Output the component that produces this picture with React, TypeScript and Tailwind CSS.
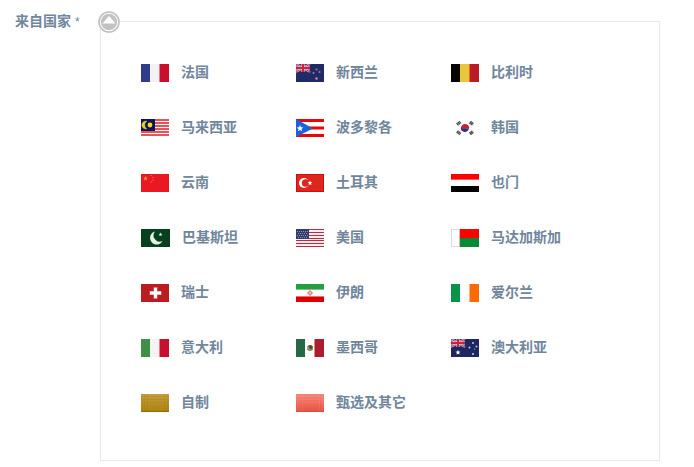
import type { ReactNode } from "react";

type Country = { name: string; flag: ReactNode; width?: number };

function Tricolor({ a, b, c }: { a: string; b: string; c: string }) {
  return (
    <>
      <rect width="28" height="18" fill={b} />
      <rect width="9" height="18" fill={a} />
      <rect x="18" width="1" height="18" fill={c} opacity="0.5" />
      <rect x="19" width="9" height="18" fill={c} />
    </>
  );
}

function UnionJack() {
  return (
    <>
      <rect width="14" height="8" fill="#2b3a80" />
      <path d="M0 0L14 8M14 0L0 8" stroke="#e8c8d4" strokeWidth="2" />
      <path d="M0 0L14 8M14 0L0 8" stroke="#d0304a" strokeWidth="1" />
      <path d="M7 0V8M0 4H14" stroke="#f0dfe6" strokeWidth="3" />
      <path d="M7 0V8M0 4H14" stroke="#d0203c" strokeWidth="2" />
    </>
  );
}

function Star({ x, y, r, fill }: { x: number; y: number; r: number; fill: string }) {
  const points = Array.from({ length: 10 }, (_, i) => {
    const radius = i % 2 ? r * 0.45 : r;
    const angle = (i * Math.PI) / 5 - Math.PI / 2;
    return `${x + radius * Math.cos(angle)},${y + radius * Math.sin(angle)}`;
  }).join(" ");
  return <polygon points={points} fill={fill} />;
}

const countries: Country[] = [
  { name: "法国", flag: <Tricolor a="#2f3c8c" b="#f3f3f4" c="#c8102e" /> },
  {
    name: "新西兰",
    flag: (
      <>
        <rect width="28" height="18" fill="#1f2a66" />
        <UnionJack />
        <circle cx="20.5" cy="5.5" r="1" fill="#b8788c" />
        <circle cx="17.5" cy="9" r="1" fill="#b8788c" />
        <circle cx="23.5" cy="8" r="1" fill="#b8788c" />
        <circle cx="20.5" cy="14.5" r="1.3" fill="#c88898" />
      </>
    ),
  },
  { name: "比利时", flag: <Tricolor a="#080404" b="#e8c83a" c="#bd1a28" /> },
  {
    name: "马来西亚",
    flag: (
      <>
        <rect width="28" height="17" fill="#fff" />
        <path d="M0 1H28M0 4H28M0 7H28M0 10H28M0 13H28M0 16H28" stroke="#e41822" strokeWidth="1.6" />
        <rect width="14" height="12" fill="#0a1460" />
        <path d="M6 2.2A4 4 0 1 0 6 9.8A4.4 4.4 0 0 1 6 2.2Z" fill="#e8d020" stroke="#e8d020" strokeWidth="0.3" />
        <circle cx="9" cy="6" r="2.4" fill="#f4dc10" />
      </>
    ),
  },
  {
    name: "波多黎各",
    flag: (
      <>
        <rect width="28" height="18" fill="#fff" />
        <path d="M0 1.5H28M0 9H28M0 16.5H28" stroke="#ee0505" strokeWidth="3" />
        <path d="M0 0L17 9.5L0 18Z" fill="#1c62dc" />
        <Star x={4} y={9.5} r={3.5} fill="#fff" />
      </>
    ),
  },
  {
    name: "韩国",
    flag: (
      <>
        <rect width="28" height="18" fill="#fefefe" />
        <path d="M10 9A4 4 0 0 1 18 9Z" fill="#c8203a" transform="rotate(20 14 9)" />
        <path d="M10 9A4 4 0 0 0 18 9Z" fill="#1c3c80" transform="rotate(20 14 9)" />
        <circle cx="12.2" cy="8.6" r="1.8" fill="#c8203a" />
        <g stroke="#484848" strokeWidth="3.2" strokeDasharray="1.4 0.3">
          <path d="M6 5.5L9.5 3M19 3L22 5.5M6 12.5L9.5 15M19 15L22 12.5" />
        </g>
      </>
    ),
  },
  {
    name: "云南",
    flag: (
      <>
        <rect width="28" height="18" fill="#ea1822" />
        <Star x={4.5} y={4.5} r={2.6} fill="#f48c38" />
        <path d="M9 1.5H11M11 3.5H13M11 6H13M9 8H11" stroke="#ee5830" />
      </>
    ),
  },
  {
    name: "土耳其",
    flag: (
      <>
        <rect width="28" height="18" fill="#d80808" />
        <rect x="1" y="1" width="26" height="16" fill="#dc261e" />
        <circle cx="8" cy="9" r="5" fill="#fff" />
        <circle cx="9.6" cy="9" r="3.8" fill="#dc261e" />
        <Star x={14} y={9} r={2.5} fill="#fff" />
      </>
    ),
  },
  {
    name: "也门",
    flag: (
      <>
        <rect width="28" height="18" fill="#fff" />
        <rect width="28" height="5" fill="#ff0000" />
        <rect y="5" width="28" height="1" fill="#ff5a5a" />
        <rect y="12" width="28" height="6" fill="#000" />
      </>
    ),
  },
  {
    name: "巴基斯坦",
    width: 29,
    flag: (
      <>
        <rect width="29" height="18" fill="#06401f" />
        <path d="M14 2.5A6.6 6.6 0 1 0 21.5 12A6.2 6.2 0 0 1 14 2.5Z" fill="#e8f0ea" />
        <Star x={19.5} y={5.5} r={2} fill="#e8f0ea" />
      </>
    ),
  },
  {
    name: "美国",
    flag: (
      <>
        <rect width="28" height="18" fill="#fbeef0" />
        <path d="M0 .5H28M0 3.5H28M0 6.5H28M0 9.5H28M0 11.5H28M0 14.5H28M0 17.5H28" stroke="#c4283c" />
        <rect width="13" height="10" fill="#323c6c" />
        <path d="M1 2.5H12M2 4.5H12M1 6.5H12M2 8.5H12" stroke="#8c94b0" strokeDasharray="1 1" />
      </>
    ),
  },
  {
    name: "马达加斯加",
    flag: (
      <>
        <rect x=".5" y=".5" width="27" height="17" fill="#fff" stroke="#dcdcdc" />
        <rect x="8" width="1" height="18" fill="#e0b8b0" />
        <rect x="9" width="19" height="9" fill="#ff0000" />
        <rect x="9" y="9" width="19" height="9" fill="#078938" />
      </>
    ),
  },
  {
    name: "瑞士",
    flag: (
      <>
        <rect width="28" height="18" fill="#ba1c22" />
        <path d="M14.5 3V15M8.5 9H20.5" stroke="#d88080" strokeWidth="4" />
        <path d="M14.5 4V14M9 9H20" stroke="#fff" strokeWidth="3" />
      </>
    ),
  },
  {
    name: "伊朗",
    flag: (
      <>
        <rect width="28" height="18" fill="#fff" />
        <rect width="28" height="6" fill="#249f40" />
        <rect y="5" width="28" height="1" fill="#7cc48c" />
        <rect y="12" width="28" height="1" fill="#f07070" />
        <rect y="13" width="28" height="5" fill="#dc0000" />
        <path d="M14 6.5L16.5 9L14 11.5L11.5 9Z" fill="#f4b0b0" stroke="#e46060" />
      </>
    ),
  },
  { name: "爱尔兰", flag: <Tricolor a="#089448" b="#fbfefc" c="#fc6a08" /> },
  { name: "意大利", flag: <Tricolor a="#3e9048" b="#f3f3f4" c="#c8102e" /> },
  {
    name: "墨西哥",
    flag: (
      <>
        <Tricolor a="#276848" b="#fbfbfb" c="#ae1c32" />
        <circle cx="14" cy="9" r="3" fill="#a89468" />
        <path d="M12 7L15 6L17 8L15 11Z" fill="#594830" />
        <path d="M11 10Q14 13 17 10" stroke="#80906c" fill="none" />
      </>
    ),
  },
  {
    name: "澳大利亚",
    flag: (
      <>
        <rect width="28" height="18" fill="#1c2660" />
        <UnionJack />
        <Star x={7} y={13.5} r={2.6} fill="#fff" />
        <circle cx="22" cy="4" r="1" fill="#c0c8dc" />
        <circle cx="18.5" cy="8.5" r="1" fill="#c0c8dc" />
        <circle cx="25.5" cy="7.5" r="1" fill="#c0c8dc" />
        <circle cx="23.5" cy="10" r=".6" fill="#c0c8dc" />
        <circle cx="22" cy="15" r="1.1" fill="#c0c8dc" />
      </>
    ),
  },
  {
    name: "自制",
    flag: (
      <>
        <defs>
          <linearGradient id="gold" x2="0" y2="1">
            <stop stopColor="#c4a03c" />
            <stop offset="1" stopColor="#ac800c" />
          </linearGradient>
        </defs>
        <rect width="28" height="18" fill="url(#gold)" />
        <path d="M1.5 0V18M3.5 0V18M6.5 0V18M23.5 0V18M26.5 0V18M0 2.5H28M0 5.5H28M0 8.5H28" stroke="#8c6804" opacity=".15" />
        <rect y="17" width="28" height="1" fill="#946c04" />
      </>
    ),
  },
  {
    name: "甄选及其它",
    flag: (
      <>
        <defs>
          <linearGradient id="coral" x2="0" y2="1">
            <stop stopColor="#f58478" />
            <stop offset="1" stopColor="#e85040" />
          </linearGradient>
        </defs>
        <rect width="28" height="18" fill="url(#coral)" />
        <path d="M1.5 0V18M3.5 0V18M6.5 0V18M23.5 0V18M26.5 0V18M0 2.5H28M0 5.5H28M0 8.5H28" stroke="#fff" opacity=".07" />
        <rect y="17" width="28" height="1" fill="#dc4c40" />
      </>
    ),
  },
];

export default function App() {
  return (
    <main className="flex items-start bg-white pt-[21px] pr-[34px] pl-[15px] font-['Liberation_Sans','Noto_Sans_CJK_SC',sans-serif] text-sm leading-5 font-bold text-[#70869d]">
      <h2 id="origin-label" className="-mt-[10px] w-[85px] shrink-0">
        来自国家 <span className="text-xs font-normal">*</span>
      </h2>
      <section
        aria-labelledby="origin-label"
        className="relative min-w-0 flex-1 border border-[#e9e9e9] px-10 pt-[23px] pb-[30px]"
      >
        <button
          type="button"
          aria-label="收起"
          className="absolute -top-[11px] -left-[3px] size-[22px] rounded-full"
        >
          <svg viewBox="0 0 22 22" className="block size-[22px]" aria-hidden="true">
            <circle cx="11" cy="11" r="10" fill="#fff" stroke="#c0c0c0" strokeWidth="1.6" />
            <circle cx="11" cy="11" r="8.2" fill="#c2c2c2" />
            <path d="M11 5L17.5 12.5H4.5Z" fill="#fff" />
          </svg>
        </button>
        <ul className="grid auto-rows-[55px] grid-cols-[repeat(auto-fill,155px)]">
          {countries.map(({ name, flag, width = 28 }) => (
            <li key={name} className="flex items-center">
              <a href="#" className="flex items-start gap-3 leading-4 whitespace-nowrap">
                <svg width={width} height="18" viewBox={`0 0 ${width} 18`} className="shrink-0" aria-hidden="true">
                  {flag}
                </svg>
                {name}
              </a>
            </li>
          ))}
        </ul>
      </section>
    </main>
  );
}
